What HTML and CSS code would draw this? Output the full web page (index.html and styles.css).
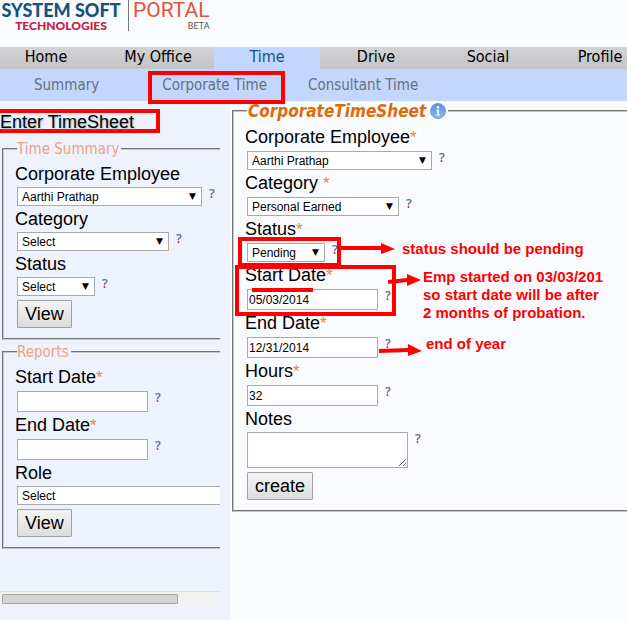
FILE: index.html
```html
<!DOCTYPE html>
<html lang="en">
<head>
<meta charset="utf-8">
<title>Enter TimeSheet</title>
<link rel="stylesheet" href="styles.css">
</head>
<body>
<header class="brand">
  <div class="company"><span class="company-name">SYSTEM SOFT</span><span class="company-sub">TECHNOLOGIES</span></div>
  <div class="product"><span class="product-name">PORTAL</span><span class="product-tag">BETA</span></div>
</header>
<nav class="tabs">
  <a href="#">Home</a><a href="#">My Office</a><a href="#" class="active">Time</a><a href="#">Drive</a><a href="#">Social</a><a href="#">Profile</a>
</nav>
<nav class="subtabs">
  <a href="#">Summary</a><a href="#" class="marked">Corporate Time</a><a href="#">Consultant Time</a>
</nav>
<div class="columns">
  <aside class="sidebar">
    <h1 class="title">Enter TimeSheet</h1>
    <div class="scroller">
      <fieldset>
        <legend>Time Summary</legend>
        <label for="s-emp">Corporate Employee</label>
        <div class="field"><span class="select w-l"><select id="s-emp"><option>Aarthi Prathap</option></select></span><a href="#" class="help">?</a></div>
        <label for="s-cat">Category</label>
        <div class="field"><span class="select w-m"><select id="s-cat"><option>Select</option></select></span><a href="#" class="help">?</a></div>
        <label for="s-status">Status</label>
        <div class="field"><span class="select w-s"><select id="s-status"><option>Select</option></select></span><a href="#" class="help">?</a></div>
        <button type="button">View</button>
      </fieldset>
      <fieldset>
        <legend>Reports</legend>
        <label for="r-start" class="required">Start Date<span class="star">*</span></label>
        <div class="field"><input type="text" id="r-start"><a href="#" class="help">?</a></div>
        <label for="r-end" class="required">End Date<span class="star">*</span></label>
        <div class="field"><input type="text" id="r-end"><a href="#" class="help">?</a></div>
        <label for="r-role">Role</label>
        <div class="field"><span class="select w-xl"><select id="r-role"><option>Select</option></select></span></div>
        <button type="button">View</button>
      </fieldset>
    </div>
    <div class="scrollbar"><div class="thumb"></div></div>
  </aside>
  <main class="content">
    <fieldset>
      <legend class="main-legend">CorporateTimeSheet
        <svg class="info" viewBox="0 0 16 16" width="16" height="16" aria-hidden="true">
          <defs><linearGradient id="ig" x1="0" y1="0" x2="0" y2="1"><stop offset="0" stop-color="#5c8fdc"/><stop offset="1" stop-color="#8fb8f2"/></linearGradient></defs>
          <circle cx="8" cy="8" r="7.5" fill="url(#ig)" stroke="#6e9be0"/>
          <circle cx="8" cy="4.2" r="1.2" fill="#fff"/><path d="M6.3 6.5H9v5h1v1H6.2v-1h1v-4h-.9z" fill="#fff"/>
        </svg>
      </legend>
      <label for="m-emp" class="required">Corporate Employee<span class="star">*</span></label>
      <div class="field"><span class="select w-l"><select id="m-emp"><option>Aarthi Prathap</option></select></span><a href="#" class="help">?</a></div>
      <label for="m-cat" class="required">Category <span class="star">*</span></label>
      <div class="field"><span class="select w-m"><select id="m-cat"><option>Personal Earned</option></select></span><a href="#" class="help">?</a></div>
      <label for="m-status" class="required">Status<span class="star">*</span></label>
      <div class="field"><span class="select w-s"><select id="m-status"><option>Pending</option></select></span><a href="#" class="help">?</a></div>
      <label for="m-start" class="required">Start Date<span class="star">*</span></label>
      <div class="field"><input type="text" id="m-start" value="05/03/2014"><a href="#" class="help">?</a></div>
      <label for="m-end" class="required">End Date<span class="star">*</span></label>
      <div class="field"><input type="text" id="m-end" value="12/31/2014"><a href="#" class="help">?</a></div>
      <label for="m-hours" class="required">Hours<span class="star">*</span></label>
      <div class="field"><input type="text" id="m-hours" value="32"><a href="#" class="help">?</a></div>
      <label for="m-notes">Notes</label>
      <div class="field"><textarea id="m-notes"></textarea><a href="#" class="help">?</a></div>
      <button type="button">create</button>
    </fieldset>
    <svg class="marks" width="200" height="130" viewBox="0 0 200 130" aria-hidden="true">
      <g fill="none" stroke="#f00" stroke-width="4">
        <rect x="10" y="4" width="99" height="26"/>
        <rect x="7" y="32" width="157" height="47"/>
        <path d="M22 55H83"/>
      </g>
      <g fill="#f00">
        <path d="M110 11H151V8L165 14L151 19V15H110z"/>
        <path d="M158 45L177 43V39L191 45L177 51V47L158 49z"/>
        <path d="M149 114L178 113V109L192 116L178 121V117L149 118z"/>
      </g>
    </svg>
    <p class="note note-status">status should be pending</p>
    <p class="note note-start">Emp started on 03/03/201<br>so start date will be after<br>2 months of probation.</p>
    <p class="note note-end">end of year</p>
  </main>
</div>
</body>
</html>
```
FILE: styles.css
```css
* { box-sizing: border-box; }
body {
  margin: 0;
  min-height: 100vh;
  display: flex;
  flex-direction: column;
  overflow: hidden;
  background: #fafbff;
  color: #000;
  font-family: "Liberation Sans", Arial, sans-serif;
  font-size: 18px;
}
a { text-decoration: none; color: inherit; }

.brand { display: flex; height: 47px; font-family: Lato, sans-serif; }
.company { display: flex; flex-direction: column; align-items: center; width: 128px; height: 31px; padding-right: 6px; }
.company-name { font-size: 18px; line-height: 20px; font-weight: 900; color: #17527f; white-space: nowrap; }
.company-sub { font-size: 12px; line-height: 12px; font-weight: 900; color: #c5203e; }
.product { display: flex; flex-direction: column; align-items: flex-end; height: 31px; padding-left: 4px; border-left: 1px solid #777; font-family: Roboto, sans-serif; }
.product-name { font-size: 21px; line-height: 21px; color: #e0553f; }
.product-tag { font-size: 9px; line-height: 10px; color: #555; }

.tabs, .subtabs { font-family: "DejaVu Sans Condensed", "DejaVu Sans", sans-serif; font-stretch: condensed; font-size: 16px; white-space: nowrap; }
.tabs {
  display: grid;
  grid-template-columns: 102px 112px 106px 112px 112px 112px;
  height: 22px;
  line-height: 19px;
  text-align: center;
  background: linear-gradient(#d3d3d5, #c4c4c8);
}
.tabs a:first-child { padding-right: 10px; }
.tabs .active { background: #c2d6ff; color: #17527f; }
.subtabs { display: flex; gap: 41px; height: 32px; padding-left: 34px; line-height: 32px; font-size: 15px; color: #6a6f78; background: #c2d6ff; }
.subtabs .marked { position: relative; margin-left: 22px; }
.subtabs .marked::after { content: ""; position: absolute; inset: 2px -18px -3px -14px; border: 4px solid #f00; z-index: 2; }

.columns { display: flex; flex: 1; }
.sidebar { flex: none; width: 230px; padding-top: 8px; background: #edf2fd; }
.title { width: 160px; height: 24px; margin: 0; border: solid #f00; border-width: 4px 4px 4px 0; font-size: 18px; line-height: 18px; font-weight: 400; text-shadow: 1px 1px 2px #9bb; }
.scroller { width: 220px; padding: 6px 0 0 2px; overflow: hidden; }
.scroller fieldset { width: 300px; }
.scroller fieldset + fieldset { margin-top: 2px; }

fieldset { min-width: 0; margin: 0; padding: 2px 0 10px 13px; border: 2px groove #c8c8c8; }
legend { height: 20px; padding: 0 2px 0 0; line-height: 20px; font-family: "DejaVu Sans Condensed", "DejaVu Sans", sans-serif; font-stretch: condensed; font-size: 15px; color: #f2a184; }
label { display: block; height: 26px; margin-left: -2px; line-height: 26px; white-space: nowrap; }
label.required { height: 27px; }
.star { font-size: 17px; color: #e8843c; }
.field { display: flex; align-items: flex-start; gap: 7px; }
.help {
  font: 600 13px/13px "Open Sans", sans-serif;
  background: linear-gradient(#5a6690 65%, #c5203e 65%);
  background-clip: text;
  color: transparent;
}
.select { position: relative; display: block; }
.select::after { content: "▼"; position: absolute; right: 6px; top: 4px; font: 9px/10px "DejaVu Sans", sans-serif; pointer-events: none; }
.w-s { width: 78px; }
.w-m { width: 152px; }
.w-l { width: 185px; }
.w-xl { width: 260px; }
select, input, textarea { display: block; margin: 0; border: 1px solid #a9a9a9; border-radius: 0; background: #fff; color: #000; font: 12px "Liberation Sans", Arial, sans-serif; }
select { appearance: none; width: 100%; height: 19px; padding: 0 4px; }
input { width: 131px; height: 21px; padding: 0 1px; }
textarea { width: 161px; height: 36px; }
button { display: block; height: 28px; margin-top: 4px; padding: 0 7px; border: 1px solid #a0a0a0; border-radius: 1px; background: linear-gradient(#f4f4f4, #dcdcdc); color: #000; font: 18px "Liberation Sans", Arial, sans-serif; }
.scrollbar { width: 220px; height: 14px; margin-top: 42px; padding: 2px; border-top: 1px solid #ddd; background: #f1f1f1; }
.thumb { width: 176px; height: 10px; border: 1px solid #a8a8a8; border-radius: 1px; background: #d4d4d4; }

.content { position: relative; flex: 1; min-width: 0; padding: 0 0 0 2px; overflow: hidden; }
.content fieldset { margin-right: -4px; padding-top: 3px; }
.main-legend { display: flex; align-items: center; gap: 4px; padding-left: 1px; font-size: 17px; font-weight: 700; font-style: italic; color: #e06a0a; }
.info { display: block; }
.marks { position: absolute; left: 0; top: 134px; }
.note { position: absolute; margin: 0; font-size: 15px; line-height: 18px; font-weight: 700; color: #f00; white-space: nowrap; }
.note-status { left: 172px; top: 139px; }
.note-start { left: 193px; top: 167px; }
.note-end { left: 196px; top: 234px; }
```
